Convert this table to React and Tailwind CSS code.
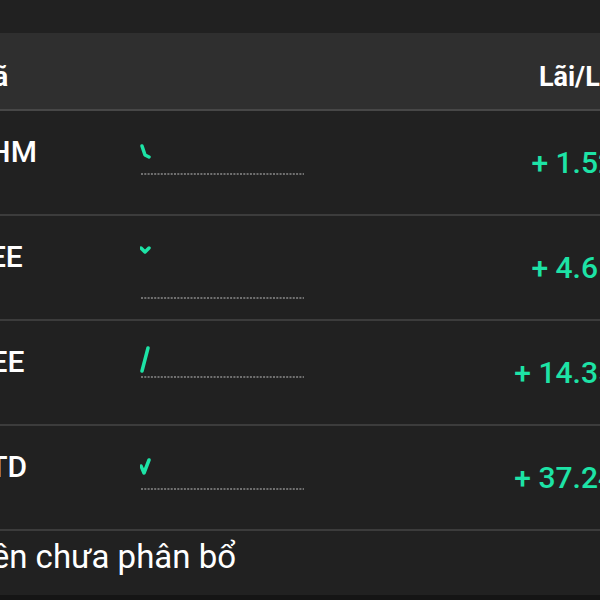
const rows = [
  { sym: "VHM", value: "+ 1.52", tick: "M2 35 L5 44 L9 46", base: 63 },
  { sym: "REE", value: "+ 4.61", tick: "M1 32 L5 36 L9 32", base: 82 },
  { sym: "GEE", value: "+ 14.35", tick: "M2 50 L8 27", base: 56 },
  { sym: "CTD", value: "+ 37.24", tick: "M1 40 L4 47 L9 34", base: 63 },
];

function Spark({ tick, base }) {
  return (
    <svg width="170" height="104" viewBox="0 0 170 104" className="shrink-0">
      <line x1="1" y1={base} x2="164" y2={base} stroke="#707070" strokeWidth="2" strokeDasharray="2 1.3" />
      <path d={tick} fill="none" stroke="#1de3a6" strokeWidth="3.5" strokeLinecap="round" strokeLinejoin="round" />
    </svg>
  );
}

export default function App() {
  return (
    <div className="w-[600px] h-[600px] overflow-hidden bg-[#212121] font-['Roboto',sans-serif]">
      <div className="h-[33px]" />
      <div className="-ml-[30px] w-[680px]">
        <div className="flex h-[78px] items-center pt-[13px] bg-[#2f2f2f] border-b-2 border-[#474747] text-[27px] font-bold text-white">
          <div className="w-[170px]">Mã</div>
          <div className="flex-1 text-right pr-[35px]">Lãi/Lỗ</div>
        </div>
        {rows.map((r) => (
          <div key={r.sym} className="flex h-[105px] border-b-2 border-[#3c3c3c]">
            <div className="w-[170px] pt-[23px] text-[30px] leading-[36px] font-medium text-white">{r.sym}</div>
            <Spark tick={r.tick} base={r.base} />
            <div className="flex-1 pt-[36px] pr-[35px] text-right text-[30px] leading-[32px] font-medium text-[#1de3a6]">{r.value}</div>
          </div>
        ))}
        <div className="h-[64px] -ml-[6px] pt-[7px] text-[33px] leading-[38px] text-white">Tiền chưa phân bổ</div>
      </div>
      <div className="h-[10px] bg-[#151515]" />
    </div>
  );
}
